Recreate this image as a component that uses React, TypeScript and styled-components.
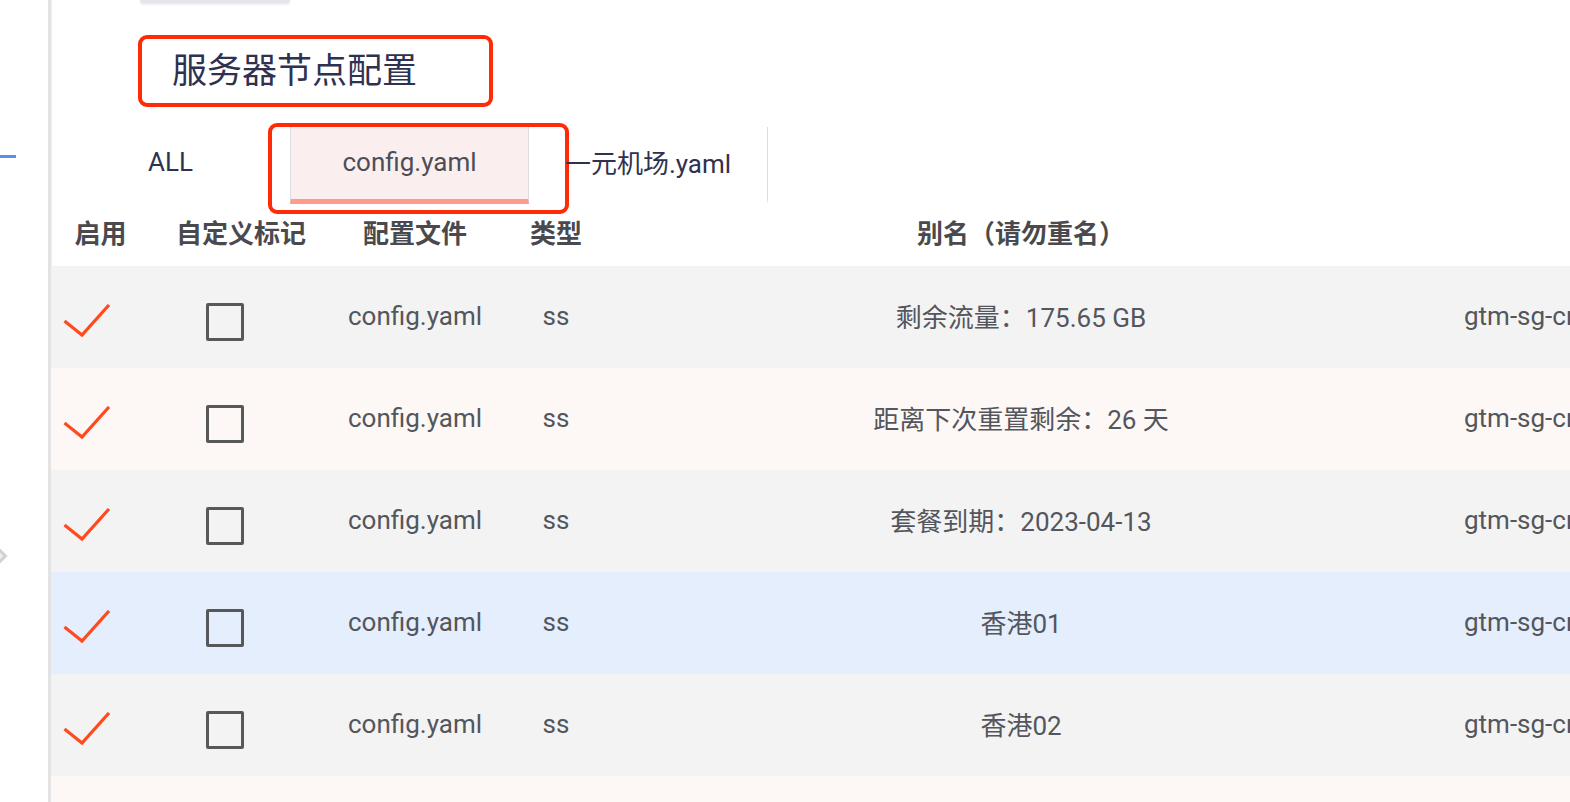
import React from "react";
import styled, { createGlobalStyle } from "styled-components";

const Global = createGlobalStyle`
  html, body { margin: 0; padding: 0; background: #fff; overflow: hidden; }
  body { font-family: Roboto, "Noto Sans CJK SC", sans-serif; }
  * { box-sizing: border-box; }
`;

const Page = styled.div`
  display: flex;
  width: 1570px;
  height: 802px;
  overflow: hidden;
`;

const Sidebar = styled.aside`
  width: 51px;
  flex-shrink: 0;
  display: flex;
  flex-direction: column;
  border-right: 3px solid #e3e3e3;
  box-shadow: 1px 0 1px #f0f0f0;
`;

const ActiveLine = styled.div`
  width: 16px;
  height: 3px;
  margin-top: 155px;
  background: #5b8def;
`;

const Chevron = styled.div`
  width: 12px;
  height: 12px;
  margin-top: 392px;
  margin-left: -7px;
  border: 3px solid #d4d0d0;
  background: #efeded;
  transform: rotate(45deg);
`;

const Main = styled.main`
  flex: 1;
  min-width: 0;
  display: flex;
  flex-direction: column;
  overflow: hidden;
  & > * {
    flex-shrink: 0;
  }
`;

const TopStub = styled.div`
  width: 150px;
  height: 3px;
  margin-left: 89px;
  background: #e4e4ea;
  border-radius: 0 0 3px 3px;
  box-shadow: 0 1px 3px rgba(0, 0, 0, 0.12);
`;

const TitleBox = styled.div`
  width: 355px;
  height: 72px;
  margin-top: 32px;
  margin-left: 87px;
  padding-left: 30px;
  padding-bottom: 8px;
  display: flex;
  align-items: center;
  border: 4px solid #ff2a06;
  border-radius: 9px;
`;

const Title = styled.h1`
  margin: 0;
  font-family: "Noto Sans CJK SC", sans-serif;
  font-size: 35px;
  font-weight: 400;
  color: #2e3250;
`;

const TabBar = styled.div`
  display: flex;
  height: 77px;
  margin-top: 20px;
`;

const Tab = styled.div<{ $active?: boolean; $last?: boolean }>`
  position: relative;
  width: 239px;
  height: 77px;
  display: flex;
  align-items: center;
  justify-content: center;
  font-size: 26px;
  color: ${(p) => (p.$active ? "#4b4e56" : "#2e3250")};
  background: ${(p) => (p.$active ? "#fbeeee" : "transparent")};
  border-left: ${(p) => (p.$active ? "1px solid #dcdcdc" : "none")};
  border-right: ${(p) => (p.$active || p.$last ? "1px solid #dcdcdc" : "none")};
  border-bottom: 5px solid ${(p) => (p.$active ? "#ff9b8e" : "transparent")};
  padding-bottom: 3px;
`;

const Annotation = styled.span`
  position: absolute;
  left: -23px;
  top: -4px;
  right: -41px;
  bottom: -15px;
  border: 4px solid #ff2a06;
  border-radius: 9px;
  pointer-events: none;
`;

const COLS = "99px 182px 166px 116px 814px 1fr";

const HeaderRow = styled.div`
  display: grid;
  grid-template-columns: ${COLS};
  height: 62px;
  align-items: center;
  padding-bottom: 7px;
`;

const HeadCell = styled.div`
  text-align: center;
  font-family: "Noto Sans CJK SC", sans-serif;
  font-size: 26px;
  font-weight: 700;
  color: #4a4a4e;
`;

const Row = styled.div<{ $bg: string }>`
  display: grid;
  grid-template-columns: ${COLS};
  height: 102px;
  align-items: center;
  background: ${(p) => p.$bg};
`;

const Cell = styled.div<{ $align?: "start" | "center"; $pad?: number }>`
  display: flex;
  justify-content: ${(p) => (p.$align === "start" ? "flex-start" : "center")};
  padding-left: ${(p) => p.$pad ?? 0}px;
  font-size: 26px;
  color: #53565c;
  white-space: nowrap;
  overflow: hidden;
  margin-top: -3px;
`;

const CheckIcon = styled.svg`
  width: 48px;
  height: 34px;
  margin-top: 10px;
`;

const Box = styled.span`
  display: block;
  width: 38px;
  height: 38px;
  margin-top: 12px;
  border: 3px solid #57585a;
  border-radius: 2px;
`;

const rows = [
  { bg: "#f3f3f3", alias: "剩余流量：175.65 GB" },
  { bg: "#fdf8f5", alias: "距离下次重置剩余：26 天" },
  { bg: "#f3f3f3", alias: "套餐到期：2023-04-13" },
  { bg: "#e4eefd", alias: "香港01" },
  { bg: "#f3f3f3", alias: "香港02" },
  { bg: "#fdf8f5", alias: "香港03" },
];

const Check = () => (
  <CheckIcon viewBox="0 0 48 34">
    <polyline
      points="1.5,17 19,31 46,1"
      fill="none"
      stroke="#ff4a1e"
      strokeWidth="3.2"
      strokeLinejoin="miter"
    />
  </CheckIcon>
);

export default function App() {
  return (
    <>
      <Global />
      <Page>
        <Sidebar>
          <ActiveLine />
          <Chevron />
        </Sidebar>
        <Main>
          <TopStub />
          <TitleBox>
            <Title>服务器节点配置</Title>
          </TitleBox>
          <TabBar>
            <Tab>ALL</Tab>
            <Tab $active>
              config.yaml
              <Annotation />
            </Tab>
            <Tab $last>一元机场.yaml</Tab>
          </TabBar>
          <HeaderRow>
            <HeadCell>启用</HeadCell>
            <HeadCell>自定义标记</HeadCell>
            <HeadCell>配置文件</HeadCell>
            <HeadCell>类型</HeadCell>
            <HeadCell>别名（请勿重名）</HeadCell>
            <HeadCell />
          </HeaderRow>
          {rows.map((r, i) => (
            <Row key={i} $bg={r.bg}>
              <Cell $align="start" $pad={12}>
                <Check />
              </Cell>
              <Cell $align="start" $pad={56}>
                <Box />
              </Cell>
              <Cell>config.yaml</Cell>
              <Cell>ss</Cell>
              <Cell>{r.alias}</Cell>
              <Cell $align="start" $pad={36}>
                gtm-sg-cn2.example.net
              </Cell>
            </Row>
          ))}
        </Main>
      </Page>
    </>
  );
}
